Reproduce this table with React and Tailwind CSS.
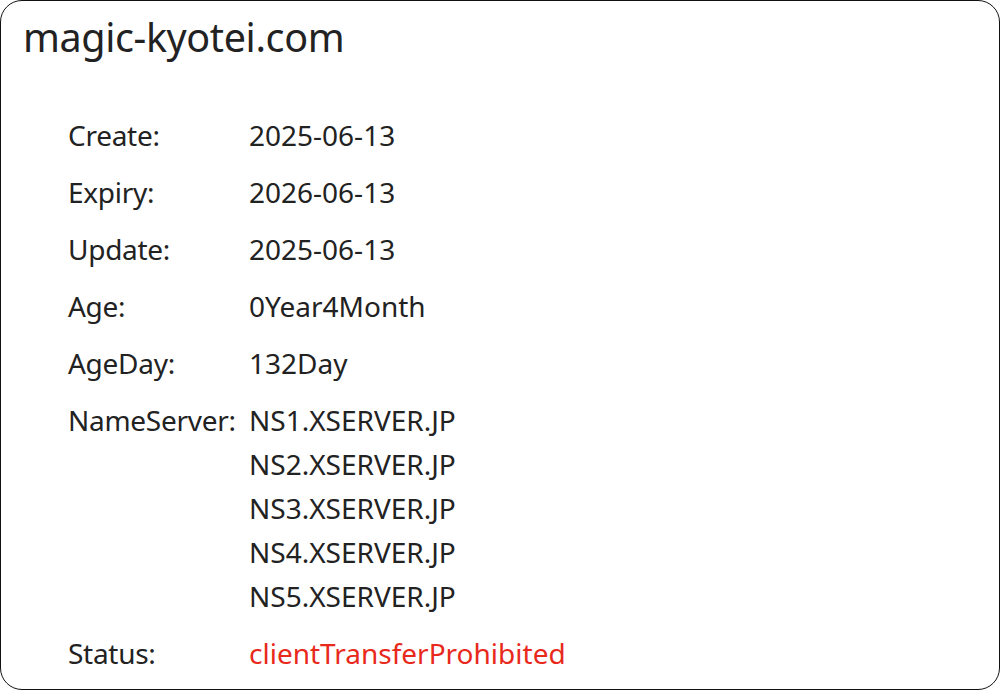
export default function App() {
  const rows = [
    ["Create:", ["2025-06-13"]],
    ["Expiry:", ["2026-06-13"]],
    ["Update:", ["2025-06-13"]],
    ["Age:", ["0Year4Month"]],
    ["AgeDay:", ["132Day"]],
    ["NameServer:", ["NS1.XSERVER.JP", "NS2.XSERVER.JP", "NS3.XSERVER.JP", "NS4.XSERVER.JP", "NS5.XSERVER.JP"]],
  ];
  return (
    <div className="w-[1000px] h-[690px] bg-white" style={{ fontFamily: '"Noto Sans", "Open Sans", sans-serif' }}>
      <div className="w-full h-full box-border border-[1.5px] border-[#111] rounded-[22px] overflow-hidden flex flex-col text-[#222]">
        <h1 className="pl-[22px] pt-[12px] text-[39.5px] leading-[48px] tracking-[-0.01em]">magic-kyotei.com</h1>
        <div className="pl-[67px] pt-[52px] flex flex-col gap-[13px] text-[28px] leading-[44px]">
          {rows.map(([label, vals]) => (
            <div key={label} className="flex">
              <div className="w-[181px] shrink-0 tracking-[-0.01em]">{label}</div>
              <div className="flex flex-col">
                {vals.map((v) => (
                  <div key={v}>{v}</div>
                ))}
              </div>
            </div>
          ))}
          <div className="flex">
            <div className="w-[181px] shrink-0 tracking-[-0.01em]">Status:</div>
            <div className="text-[#e8291c]">clientTransferProhibited</div>
          </div>
        </div>
      </div>
    </div>
  );
}
